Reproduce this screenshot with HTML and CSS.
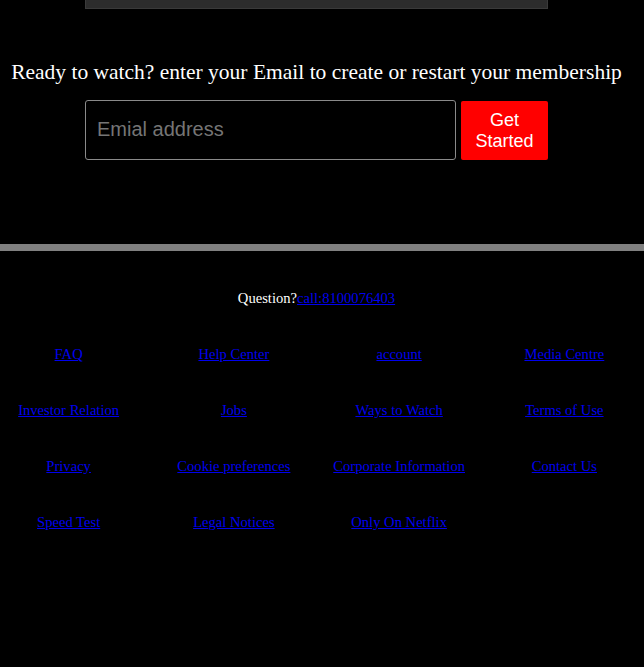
FILE: index.html
```html
<!DOCTYPE html>
<html>
<head>
<meta charset="utf-8">
<link rel="stylesheet" href="styles.css">
</head>
<body>
<div class="wrap">
  <div class="topbox"></div>
  <h2 class="cta">Ready to watch? enter your Email to create or restart your membership</h2>
  <form class="signup">
    <input class="email" type="text" placeholder="Emial address">
    <button class="start" type="button">Get<br>Started</button>
  </form>
</div>
<div class="divider"></div>
<footer class="wrap footer">
  <p class="question">Question?<a href="#">call:8100076403</a></p>
  <div class="links">
    <a href="#">FAQ</a>
    <a href="#">Help Center</a>
    <a href="#">account</a>
    <a href="#">Media Centre</a>
    <a href="#">Investor Relation</a>
    <a href="#">Jobs</a>
    <a href="#">Ways to Watch</a>
    <a href="#">Terms of Use</a>
    <a href="#">Privacy</a>
    <a href="#">Cookie preferences</a>
    <a href="#">Corporate Information</a>
    <a href="#">Contact Us</a>
    <a href="#">Speed Test</a>
    <a href="#">Legal Notices</a>
    <a href="#">Only On Netflix</a>
  </div>
</footer>
</body>
</html>
```
FILE: styles.css
```css
html, body {
  margin: 0;
  padding: 0;
  background: #000;
  color: #fff;
  font-family: "Liberation Serif", "Times New Roman", serif;
}
.wrap {
  width: 633px;
}
.topbox {
  width: 461px;
  height: 8px;
  margin-left: 85px;
  background: #2c2c2c;
  border: 1px solid #3a3a3a;
  border-top: 0;
}
.cta {
  margin: 52px 0 0;
  font-size: 21.5px;
  font-weight: normal;
  line-height: 23px;
  text-align: center;
}
.signup {
  display: flex;
  gap: 5px;
  margin: 16px 0 0 85px;
}
.email {
  box-sizing: border-box;
  width: 371px;
  height: 60px;
  margin: 0;
  padding: 0 11px 2px;
  background: #000;
  border: 1px solid #8a8a8a;
  border-radius: 3px;
  color: #fff;
  font-family: "Liberation Sans", Arial, sans-serif;
  font-size: 20px;
  outline: none;
}
.email::placeholder {
  color: #757575;
}
.start {
  box-sizing: border-box;
  width: 87px;
  height: 59px;
  margin-top: 1px;
  padding: 0;
  background: #ff0000;
  border: 0;
  border-radius: 2px;
  color: #fff;
  font-family: "Liberation Sans", Arial, sans-serif;
  font-size: 18px;
  line-height: 21px;
}
.divider {
  height: 7px;
  margin-top: 84px;
  background: #808080;
}
.question {
  margin: 39px 0 0;
  font-size: 14.6px;
  text-align: center;
}
.question a, .links a {
  color: #0000ee;
}
.links {
  display: grid;
  grid-template-columns: repeat(4, 1fr);
  column-gap: 28px;
  row-gap: 39px;
  margin-top: 39px;
  font-size: 14.6px;
  line-height: 17px;
  text-align: center;
}
```
